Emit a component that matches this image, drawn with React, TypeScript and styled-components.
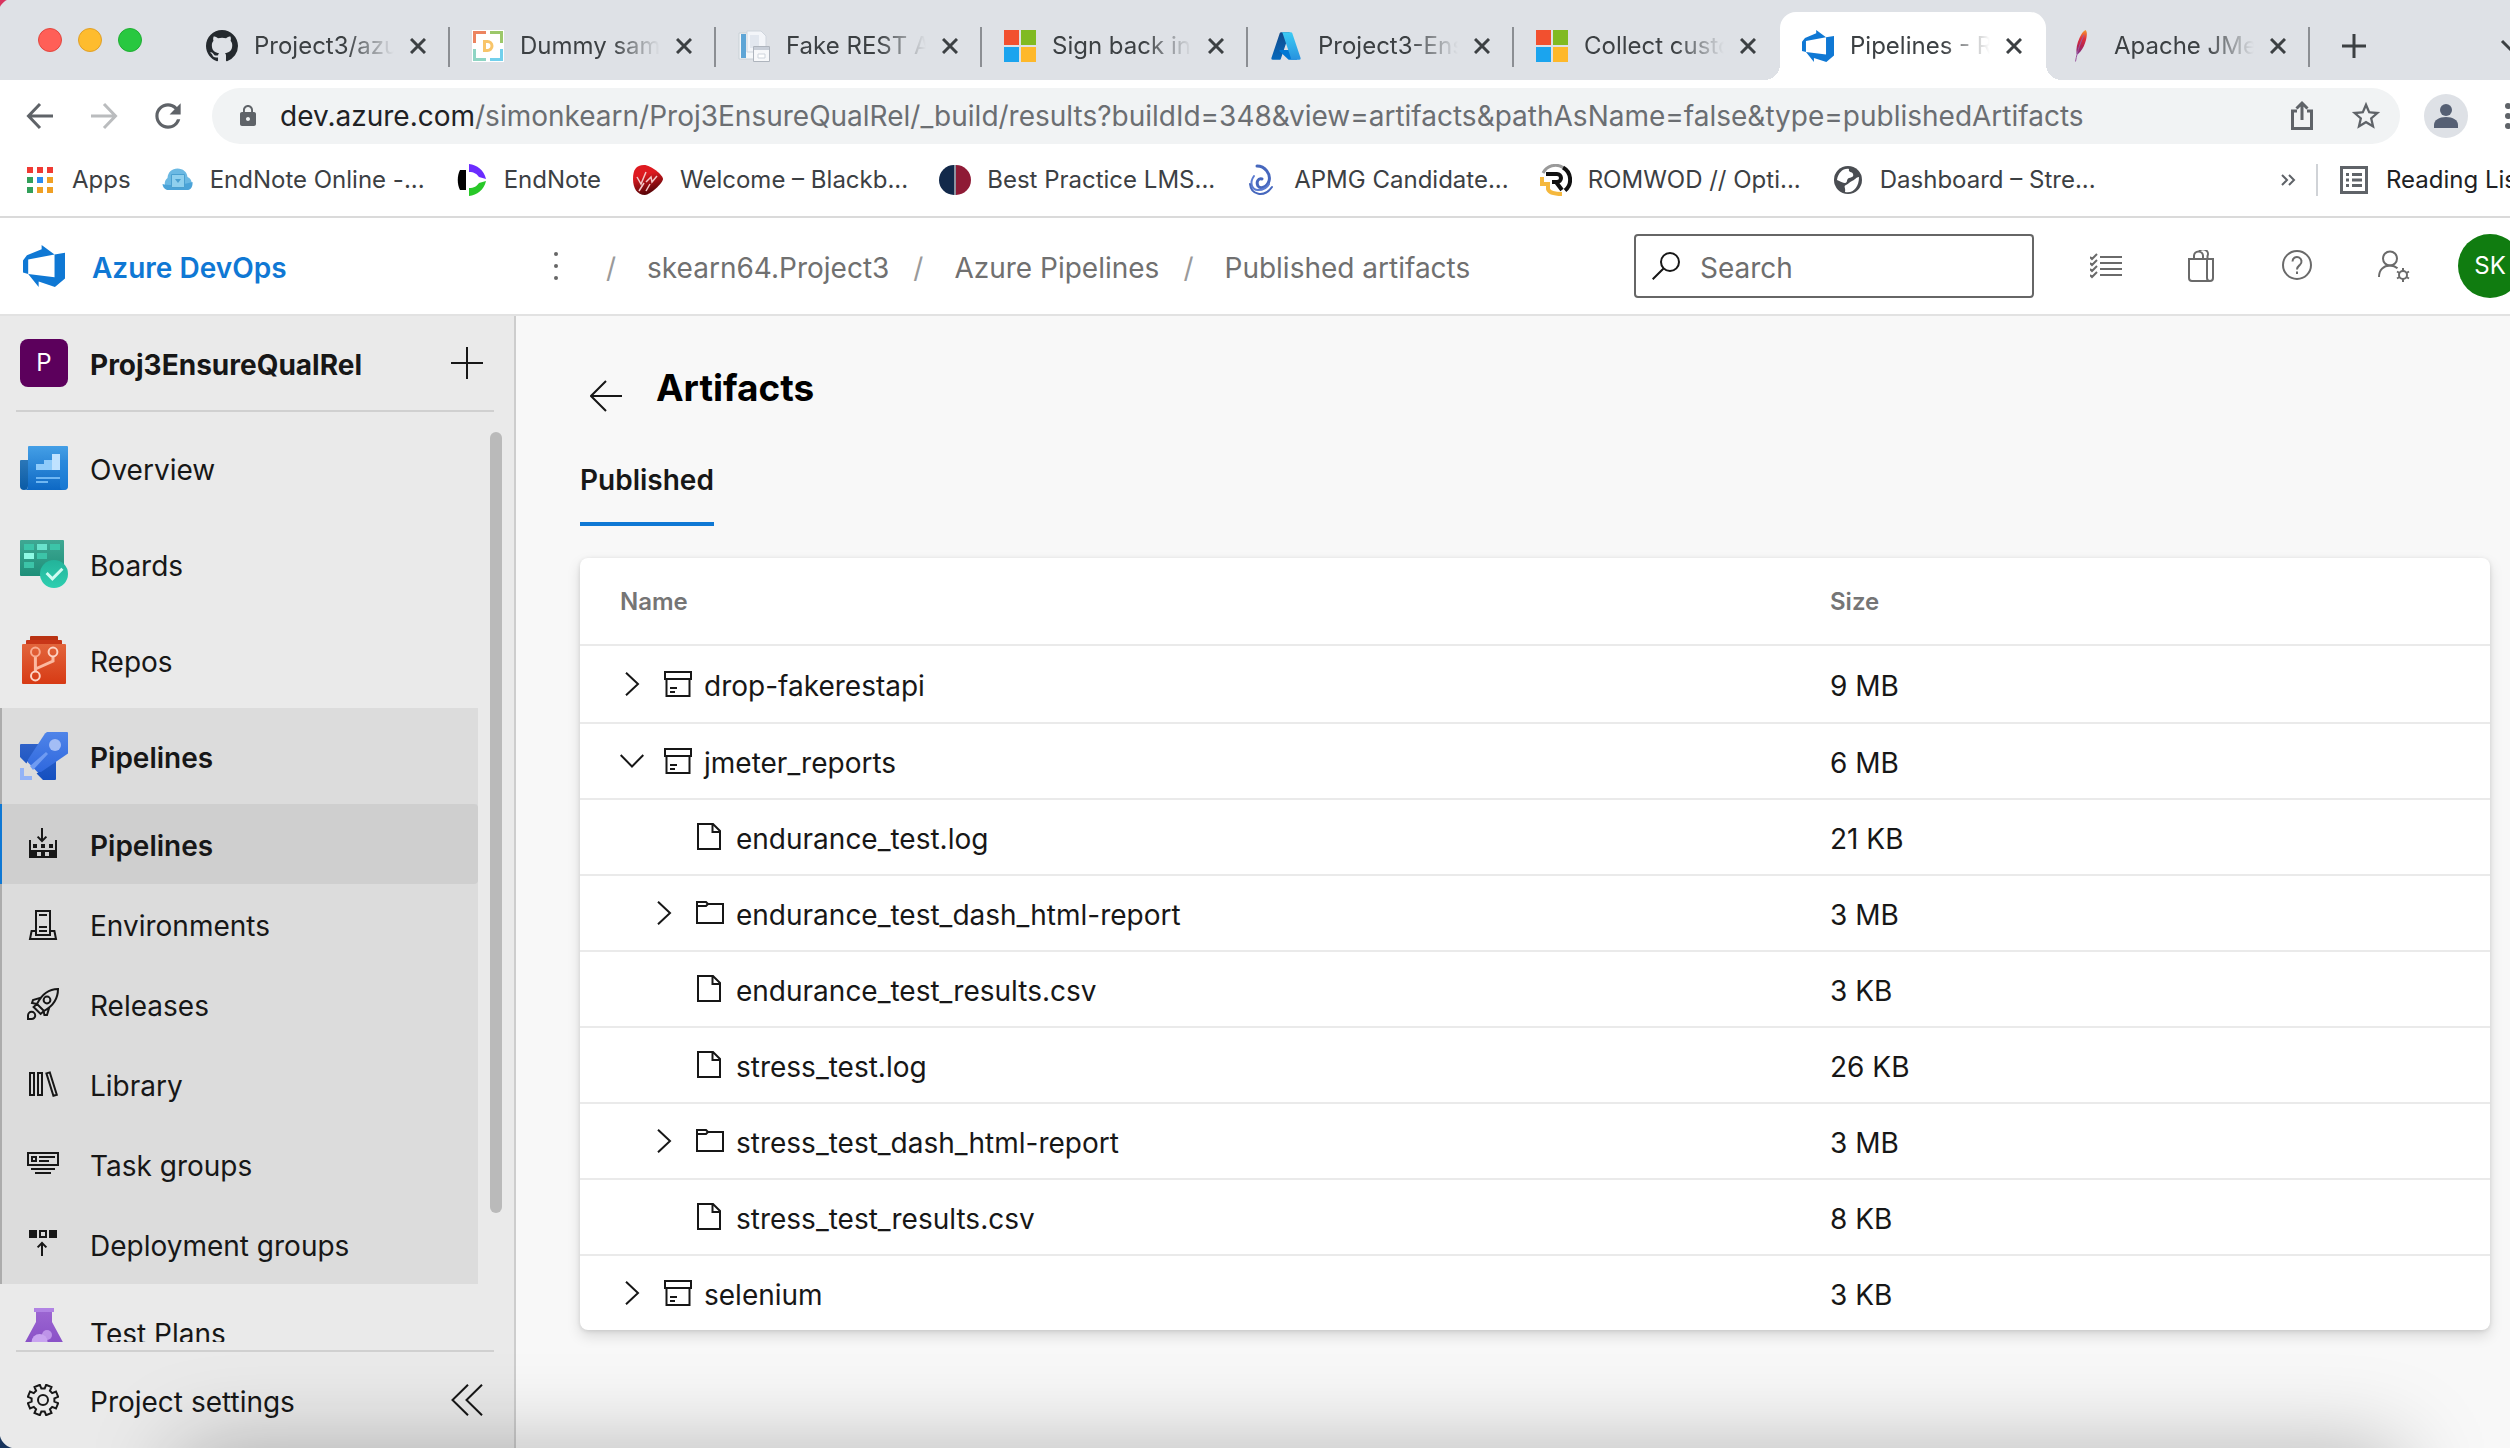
import React from 'react';
import styled, { createGlobalStyle, css } from 'styled-components';
import { MdLock, MdRefresh, MdStarBorder } from 'react-icons/md';

const ink = '#171717';
const muted = '#6e6e6e';
const blue = '#0f78d4';
const chromeInk = '#3c4043';
const chromeGrey = '#5f6368';

const GlobalStyle = createGlobalStyle`
  *, *::before, *::after { box-sizing: border-box; }
  body {
    margin: 0;
    background: #fff;
    color: ${ink};
    font-family: Inter, "Liberation Sans", sans-serif;
    font-size: 28px;
    line-height: 36px;
  }
  button {
    padding: 0;
    border: 0;
    background: none;
    color: inherit;
    font: inherit;
    cursor: pointer;
  }
  input { font: inherit; }
  a { color: inherit; text-decoration: none; }
  svg { display: block; flex: none; }
`;

/* ---------- shared ---------- */

const Shell = styled.div`
  position: relative;
  display: flex;
  flex-direction: column;
  height: 100vh;
  overflow: hidden;
`;

const IconButton = styled.button<{ $w?: number; $h?: number }>`
  display: flex;
  flex: none;
  align-items: center;
  justify-content: center;
  width: ${(p) => p.$w ?? 64}px;
  height: ${(p) => p.$h ?? 64}px;
`;

const Label = styled.span`
  padding-top: 4px;
`;

const Line = ({ size, box, d, width, color = ink, fill = 'none' }: {
  size: number; box: number; d: string; width: number; color?: string; fill?: string;
}) => (
  <svg width={size} height={size} viewBox={`0 0 ${box} ${box}`} fill={fill} stroke={color} strokeWidth={width} aria-hidden="true">
    <path d={d} />
  </svg>
);

const gear = (cx: number, cy: number, teeth: number, outer: number, inner: number) => {
  const step = (Math.PI * 2) / teeth;
  const at = (r: number, a: number) => `${(cx + r * Math.sin(a)).toFixed(2)} ${(cy - r * Math.cos(a)).toFixed(2)}`;
  let d = '';
  for (let i = 0; i < teeth; i += 1) {
    const a = (i + 0.5) * step;
    d += `${i === 0 ? 'M' : 'L'}${at(inner, a - step * 0.32)}L${at(outer, a - step * 0.24)}L${at(outer, a + step * 0.24)}L${at(inner, a + step * 0.32)}`;
  }
  return `${d}Z`;
};

/* ---------- logos ---------- */

const DevOpsLogo = ({ size }: { size: number }) => (
  <svg width={size} height={size} viewBox="0 0 24 24" fill={blue} aria-hidden="true">
    <path d="M0 8.877L2.247 5.91l8.405-3.416V.022l7.37 5.393L2.966 8.338v8.225L0 15.707zm24-4.45v14.651l-5.753 4.9-9.303-3.057v3.056l-5.978-7.416 15.057 1.798V5.415z" />
  </svg>
);

const GitHubLogo = () => (
  <svg width="32" height="32" viewBox="0 0 16 16" fill="#24292e" aria-hidden="true">
    <path d="M8 0C3.58 0 0 3.58 0 8c0 3.54 2.29 6.53 5.47 7.59.4.07.55-.17.55-.38 0-.19-.01-.82-.01-1.49-2.01.37-2.53-.49-2.69-.94-.09-.23-.48-.94-.82-1.13-.28-.15-.68-.52-.01-.53.63-.01 1.08.58 1.23.82.72 1.21 1.87.87 2.33.66.07-.52.28-.87.51-1.07-1.78-.2-3.64-.89-3.64-3.95 0-.87.31-1.59.82-2.15-.08-.2-.36-1.02.08-2.12 0 0 .67-.21 2.2.82.64-.18 1.32-.27 2-.27.68 0 1.36.09 2 .27 1.53-1.04 2.2-.82 2.2-.82.44 1.1.16 1.92.08 2.12.51.56.82 1.27.82 2.15 0 3.07-1.87 3.75-3.65 3.95.29.25.54.73.54 1.48 0 1.07-.01 1.93-.01 2.2 0 .21.15.46.55.38A8.013 8.013 0 0 0 16 8c0-4.42-3.58-8-8-8z" />
  </svg>
);

const DummyLogo = () => (
  <svg width="32" height="32" viewBox="0 0 32 32" fill="none" strokeWidth="3" aria-hidden="true">
    <rect width="32" height="32" fill="#fff" />
    <path d="M2.500 13V2.500H14" stroke="#ec8460" />
    <path d="M18 2.500h11.500V13" stroke="#9cc86a" />
    <path d="M2.500 19v10.500H14" stroke="#8fd5c4" />
    <path d="M18 29.500h11.500V19" stroke="#72d0ec" />
    <path d="M12.500 11.500h3a4.500 4.500 0 0 1 0 9h-3z" stroke="#f8c56a" />
  </svg>
);

const PagesLogo = () => (
  <svg width="32" height="32" viewBox="0 0 32 32" aria-hidden="true">
    <path d="M1 3h20v26H1z" fill="#f5f7f9" stroke="#c9d0d6" />
    <path d="M3 4h5v24H3z" fill="#5ea5d6" />
    <path d="M9 1h14l5 5v16H9z" fill="#f3f5f9" stroke="#cfd5dd" />
    <path d="M12 5h9v13h-9z" fill="#e2e7ef" />
    <path d="M15.500 16.500h16v15h-16z" fill="#f7f8fa" stroke="#aeb4bd" />
    <path d="M16 17h15v3H16z" fill="#c8ced8" />
    <path d="M20 24h7v4h-7z" fill="#fff" stroke="#cfd5dd" />
  </svg>
);

const MicrosoftLogo = () => (
  <svg width="32" height="32" viewBox="0 0 32 32" aria-hidden="true">
    <path d="M0 0h15v15H0z" fill="#f2502f" />
    <path d="M17 0h15v15H17z" fill="#80ba22" />
    <path d="M0 17h15v15H0z" fill="#1ba4ee" />
    <path d="M17 17h15v15H17z" fill="#feb82a" />
  </svg>
);

const AzureLogo = () => (
  <svg width="32" height="32" viewBox="0 0 96 96" aria-hidden="true">
    <defs>
      <linearGradient id="azL" x1="0" y1="0" x2="0" y2="1"><stop stopColor="#114a8b" /><stop offset="1" stopColor="#0669bc" /></linearGradient>
      <linearGradient id="azR" x1="0" y1="0" x2="0" y2="1"><stop stopColor="#3ccbf4" /><stop offset="1" stopColor="#2892df" /></linearGradient>
    </defs>
    <path fill="url(#azL)" d="M33.338 6.544h26.038l-27.030 80.087a4.152 4.152 0 0 1-3.933 2.824H8.149a4.145 4.145 0 0 1-3.928-5.470L29.404 9.368a4.152 4.152 0 0 1 3.934-2.825z" />
    <path fill="#0078d4" d="M71.175 60.261h-41.290a1.911 1.911 0 0 0-1.305 3.309l26.532 24.764a4.171 4.171 0 0 0 2.846 1.121h23.380z" />
    <path fill="url(#azR)" d="M66.595 9.364a4.145 4.145 0 0 0-3.928-2.820H33.648a4.146 4.146 0 0 1 3.928 2.820l25.184 74.620a4.146 4.146 0 0 1-3.928 5.472h29.020a4.146 4.146 0 0 0 3.927-5.472z" />
  </svg>
);

const FeatherLogo = () => (
  <svg width="32" height="32" viewBox="0 0 32 32" aria-hidden="true">
    <defs>
      <linearGradient id="fth" x1="0" y1="1" x2="0" y2="0">
        <stop stopColor="#7b2f8b" /><stop offset=".35" stopColor="#b5234f" /><stop offset=".65" stopColor="#e0303a" /><stop offset="1" stopColor="#f79a2e" />
      </linearGradient>
    </defs>
    <path fill="url(#fth)" d="M19.500 0c2 1.500 1.500 6 .500 10s-3 8.500-5.500 11.500l-3 3-1-1c-.500-5 .500-10 3-15.500C15 4.500 17 1 19.500 0z" />
    <path d="M18 5c-3 6-6.500 15-8.500 26.500" fill="none" stroke="#9b5aa0" strokeWidth="1" />
  </svg>
);

const AppsLogo = () => (
  <svg width="32" height="32" viewBox="0 0 32 32" aria-hidden="true">
    {[['#f03a33', '#f03a33', '#f03a33'], ['#32a05a', '#2a8bf2', '#f0a024'], ['#32a05a', '#f0a024', '#f0a024']].map((row, y) =>
      row.map((c, x) => <rect key={`${x}${y}`} x={3 + x * 10} y={3 + y * 10} width="6" height="6" fill={c} />),
    )}
  </svg>
);

const CloudLogo = () => (
  <svg width="32" height="32" viewBox="0 0 32 32" aria-hidden="true">
    <path d="M7 26a7 7 0 0 1-1.500-12C6 8 10 4.500 15.500 4.500S25 8 25.500 13a7 7 0 0 1-.500 13z" fill="#6bb9e3" />
    <path d="M5 26a7 7 0 0 1-4.500-6c6 2 21 1 30-2 .500 4-1.500 8-4.500 8z" fill="#4aa3d8" />
    <path d="M9.500 10.500h13v13h-13z" fill="#8fd0ee" stroke="#4aa0d0" />
    <path d="M13 15h6l-3 4z" fill="#4aa0d0" />
  </svg>
);

const EndNoteLogo = () => (
  <svg width="32" height="32" viewBox="0 0 32 32" aria-hidden="true">
    <path d="M4 6h6v20H4C1 20 1 12 4 6z" fill="#000" />
    <path d="M13 0c8 1 15 6 17 15l-7-2c-2-3-5-5-10-5z" fill="#6b2cff" />
    <path d="M13 32c8-1 15-6 17-15l-7 2c-2 3-5 5-10 5z" fill="#28c828" />
  </svg>
);

const VirginLogo = () => (
  <svg width="32" height="32" viewBox="0 0 32 32" aria-hidden="true">
    <defs><linearGradient id="vrg" x1="0" y1="0" x2=".3" y2="1"><stop offset=".4" stopColor="#de1a20" /><stop offset="1" stopColor="#5a0508" /></linearGradient></defs>
    <path d="M12 1c7 0 19 10 19 14S18 31 13 31C5 31 1 24 1 15S4 1 12 1z" fill="url(#vrg)" />
    <path d="M5 13l4 7 5-12M14 18l5-5 1 5 5-6M7 27l5-8M18 20l-4 7" fill="none" stroke="#f3c9c9" strokeWidth="1.500" />
  </svg>
);

const BestPracticeLogo = () => (
  <svg width="32" height="32" viewBox="0 0 32 32" aria-hidden="true">
    <path d="M15 1a15 15 0 0 0 0 30z" fill="#12294a" />
    <path d="M17 1a15 15 0 0 1 0 30z" fill="#8f1b36" />
    <path d="M15 1h2v30h-2z" fill="#8d93a0" />
  </svg>
);

const ApmgLogo = () => (
  <svg width="32" height="32" viewBox="0 0 32 32" fill="none" strokeLinecap="round" aria-hidden="true">
    <path d="M11 2c8 0 14 8 12 15-2 7-9 8-11 5-2-4 0-8 4-7" stroke="#4667bd" strokeWidth="3" />
    <path d="M8 12c-5 7-2 14 4 14 5 0 9-2 11-6" stroke="#5b7bd0" strokeWidth="2" />
    <path d="M4 20c1 11 14 14 22 3" stroke="#4667bd" strokeWidth="2" />
  </svg>
);

const RomwodLogo = () => (
  <svg width="32" height="32" viewBox="0 0 32 32" fill="none" aria-hidden="true">
    <path d="M3 9A14 14 0 0 1 23 3.500" stroke="#9a9a9a" strokeWidth="3" />
    <path d="M23 3.500a14 14 0 0 1 2 23" stroke="#111" strokeWidth="4" />
    <path d="M2 13v7h6v5c1 4 6 5 14 5" stroke="#f5b83d" strokeWidth="4" />
    <path d="M6 10h11a4 4 0 0 1 0 8h-5M16 18l6 8" stroke="#111" strokeWidth="4" />
  </svg>
);

const GlobeLogo = () => (
  <svg width="32" height="32" viewBox="0 0 32 32" aria-hidden="true">
    <circle cx="16" cy="16" r="14" fill="#4a4d52" />
    <path d="M17 5c-6-1-11 4-12 11 3 1 6 3 8 3 3 0 1-4 4-5s5-1 4-4-5-1-4-5zM27 13c-3 0-4 3-7 4s-3 3-6 4 0 3-1 7c8 2 14-5 14-15z" fill="#fff" />
  </svg>
);

/* ---------- browser chrome ---------- */

const TabStrip = styled.div`
  display: flex;
  flex: none;
  align-items: flex-end;
  height: 80px;
  padding-left: 38px;
  background: #dee1e6;
`;

const Lights = styled.div`
  display: flex;
  align-self: center;
  gap: 16px;
  margin-right: 42px;
`;

const Light = styled.button<{ $fill: string; $edge: string }>`
  width: 24px;
  height: 24px;
  border: 1px solid ${(p) => p.$edge};
  border-radius: 50%;
  background: ${(p) => p.$fill};
`;

const flare = css`
  content: '';
  position: absolute;
  bottom: 0;
  width: 16px;
  height: 16px;
`;

const Tab = styled.div<{ $active?: boolean; $line?: boolean }>`
  position: relative;
  display: flex;
  flex: none;
  align-items: center;
  gap: 16px;
  width: 266px;
  height: 68px;
  padding-left: 22px;
  border-radius: 16px 16px 0 0;
  background: ${(p) => (p.$active ? '#fff' : 'transparent')};

  ${(p) => p.$active && css`
    margin-right: -2px;

    &::before {
      ${flare}
      right: 100%;
      background: radial-gradient(circle at 0 0, transparent 16px, #fff 16px);
    }
    &::after {
      ${flare}
      left: 100%;
      background: radial-gradient(circle at 100% 0, transparent 16px, #fff 16px);
    }
  `}
  ${(p) => p.$line && css`
    &::after {
      content: '';
      position: absolute;
      right: 0;
      top: 15px;
      width: 2px;
      height: 40px;
      background: #8b8e93;
    }
  `}
`;

const TabTitle = styled.button`
  width: 140px;
  overflow: hidden;
  color: ${chromeInk};
  font-size: 24px;
  line-height: 32px;
  text-align: left;
  white-space: nowrap;
  mask-image: linear-gradient(90deg, #000 66%, transparent 100%);
`;

const ChromeBar = styled.div`
  display: flex;
  flex: none;
  align-items: center;
  height: 72px;
  padding-left: 8px;
  background: #fff;
`;

const Omnibox = styled.div`
  display: flex;
  flex: 1;
  align-items: center;
  height: 56px;
  margin: 0 24px 0 12px;
  padding: 0 2px 0 24px;
  border-radius: 28px;
  background: #f1f3f4;
  color: #202124;
`;

const Host = styled.label`
  margin-left: 20px;
`;

const Address = styled.input`
  flex: 1;
  min-width: 0;
  padding: 0;
  border: 0;
  background: none;
  color: #6b6e72;
  outline: none;
`;

const Profile = styled.button`
  flex: none;
  width: 44px;
  height: 44px;
  overflow: hidden;
  border-radius: 50%;
  background: #dee1e6;
`;

const MoreSlot = styled.div`
  flex: none;
  margin: 0 -22px 0 16px;
`;

const Bookmarks = styled.nav`
  display: flex;
  flex: none;
  align-items: center;
  gap: 31px;
  height: 66px;
  padding: 0 0 8px 24px;
  border-bottom: 2px solid #dadada;
  background: #fff;
  color: ${chromeInk};
  font-size: 24px;
  line-height: 32px;
  white-space: nowrap;
`;

const Bookmark = styled.a`
  display: flex;
  align-items: center;
  gap: 16px;
`;

const BookmarkEnd = styled.div`
  display: flex;
  flex: none;
  align-items: center;
  width: 230px;
  margin-left: auto;
  color: #202124;
`;

const Reading = styled(Bookmark)`
  margin-left: 20px;
  padding-left: 20px;
  border-left: 2px solid #d0d3d7;
`;

const TabEnd = styled.div`
  align-self: center;
  margin: 12px -14px 0 auto;
`;

const tabs = [
  { title: 'Project3/azu', icon: <GitHubLogo /> },
  { title: 'Dummy sam', icon: <DummyLogo /> },
  { title: 'Fake REST A', icon: <PagesLogo /> },
  { title: 'Sign back in', icon: <MicrosoftLogo /> },
  { title: 'Project3-Ens', icon: <AzureLogo /> },
  { title: 'Collect custo', icon: <MicrosoftLogo /> },
  { title: 'Pipelines - R', icon: <DevOpsLogo size={32} /> },
  { title: 'Apache JMe', icon: <FeatherLogo /> },
];
const activeTab = 6;

const bookmarks = [
  { title: 'Apps', icon: <AppsLogo /> },
  { title: 'EndNote Online -...', icon: <CloudLogo /> },
  { title: 'EndNote', icon: <EndNoteLogo /> },
  { title: 'Welcome – Blackb...', icon: <VirginLogo /> },
  { title: 'Best Practice LMS...', icon: <BestPracticeLogo /> },
  { title: 'APMG Candidate...', icon: <ApmgLogo /> },
  { title: 'ROMWOD // Opti...', icon: <RomwodLogo /> },
  { title: 'Dashboard – Stre...', icon: <GlobeLogo /> },
];

const Browser = () => (
  <>
    <TabStrip>
      <Lights>
        <Light $fill="#ff5f57" $edge="#e2463f" aria-label="Close window" />
        <Light $fill="#febc2e" $edge="#e0a028" aria-label="Minimise window" />
        <Light $fill="#28c840" $edge="#1fae33" aria-label="Zoom window" />
      </Lights>
      {tabs.map((tab, i) => (
        <Tab key={tab.title} $active={i === activeTab} $line={i !== activeTab && i !== activeTab - 1}>
          {tab.icon}
          <TabTitle>{tab.title}</TabTitle>
          <IconButton $w={16} $h={32} aria-label="Close tab">
            <Line size={16} box={16} d="M1 1l14 14M15 1L1 15" width={3} color={chromeInk} />
          </IconButton>
        </Tab>
      ))}
      <IconButton $w={88} $h={68} aria-label="New tab">
        <Line size={24} box={24} d="M12 0v24M0 12h24" width={3} color={chromeInk} />
      </IconButton>
      <TabEnd>
        <IconButton $w={24} $h={24} aria-label="Search tabs">
          <Line size={24} box={24} d="M2 7l10 10L22 7" width={3} color={chromeInk} />
        </IconButton>
      </TabEnd>
    </TabStrip>
    <ChromeBar>
      <IconButton aria-label="Back">
        <Line size={32} box={32} d="M29 16H5M16 4L4.500 16L16 28" width={3} color={chromeGrey} />
      </IconButton>
      <IconButton aria-label="Forward">
        <Line size={32} box={32} d="M3 16h24M16 4l11.500 12L16 28" width={3} color="#babcbe" />
      </IconButton>
      <IconButton aria-label="Reload"><MdRefresh size={38} color={chromeGrey} /></IconButton>
      <Omnibox>
        <MdLock size={24} color={chromeGrey} />
        <Host htmlFor="address">dev.azure.com</Host>
        <Address
          id="address"
          aria-label="Address"
          defaultValue="/simonkearn/Proj3EnsureQualRel/_build/results?buildId=348&view=artifacts&pathAsName=false&type=publishedArtifacts"
        />
        <IconButton $h={56} aria-label="Share">
          <Line size={32} box={32} d="M11 11H6.500v17.500h19V11H21M16 20V4M10.500 8.500L16 3l5.500 5.500" width={3} color={chromeGrey} />
        </IconButton>
        <IconButton $h={56} aria-label="Bookmark this page"><MdStarBorder size={34} color={chromeGrey} /></IconButton>
      </Omnibox>
      <Profile aria-label="Profile">
        <svg width="44" height="44" viewBox="0 0 44 44" fill="#566074" aria-hidden="true">
          <circle cx="22" cy="16" r="6" />
          <path d="M10 34v-3c0-5 5-8 12-8s12 3 12 8v3z" />
        </svg>
      </Profile>
      <MoreSlot>
        <IconButton $w={48} $h={48} aria-label="Menu">
          <svg width="32" height="32" viewBox="0 0 32 32" fill={chromeGrey} aria-hidden="true">
            <circle cx="16" cy="6" r="3" /><circle cx="16" cy="16" r="3" /><circle cx="16" cy="26" r="3" />
          </svg>
        </IconButton>
      </MoreSlot>
    </ChromeBar>
    <Bookmarks aria-label="Bookmarks">
      {bookmarks.map((b) => <Bookmark key={b.title} href="#">{b.icon}{b.title}</Bookmark>)}
      <BookmarkEnd>
        <IconButton $w={16} $h={32} aria-label="More bookmarks">
          <Line size={16} box={16} d="M2 3l5 5-5 5M9 3l5 5-5 5" width={2} color={chromeGrey} />
        </IconButton>
        <Reading href="#">
          <svg width="32" height="32" viewBox="0 0 32 32" fill="none" stroke={chromeGrey} strokeWidth="3" aria-hidden="true">
            <path d="M3.500 3.500h25v25h-25zM8 10.500h3M14 10.500h10M8 16h3M14 16h10M8 21.500h3M14 21.500h10" />
          </svg>
          Reading List
        </Reading>
      </BookmarkEnd>
    </Bookmarks>
  </>
);

/* ---------- Azure DevOps header ---------- */

const Header = styled.header`
  display: flex;
  flex: none;
  align-items: center;
  height: 98px;
  border-bottom: 2px solid #e2e2e2;
  background: #fff;
  white-space: nowrap;
`;

const Brand = styled.a`
  display: flex;
  flex: none;
  align-items: center;
  gap: 27px;
  width: 516px;
  padding-left: 23px;
  color: ${blue};
  font-weight: 600;
`;

const Crumbs = styled.ol`
  display: flex;
  gap: 24px;
  margin: 0;
  padding: 4px 0 0 10px;
  color: #707070;
  list-style: none;
`;

const Crumb = styled.li`
  display: flex;
  gap: 31px;

  &::before {
    content: '/';
    color: #9a9a9a;
  }
`;

const HeaderEnd = styled.div`
  display: flex;
  gap: 32px;
  align-items: center;
  margin: 0 -12px 0 auto;
`;

const SearchBox = styled.label`
  display: flex;
  align-items: center;
  gap: 20px;
  width: 400px;
  height: 64px;
  margin-right: 8px;
  padding: 0 16px;
  border: 2px solid #666;
  border-radius: 4px;
`;

const SearchInput = styled.input`
  min-width: 0;
  flex: 1;
  padding: 4px 0 0;
  border: 0;
  background: none;
  outline: none;

  &::placeholder { color: ${muted}; opacity: 1; }
`;

const Avatar = styled.button`
  width: 64px;
  height: 64px;
  border-radius: 50%;
  background: #107c10;
  color: #fff;
  font-size: 24px;
  line-height: 64px;
`;

const iconGrey = '#6a6a6a';

const AppHeader = () => (
  <Header>
    <Brand href="#"><DevOpsLogo size={42} /><Label>Azure DevOps</Label></Brand>
    <IconButton $w={80} aria-label="More">
      <svg width="32" height="32" viewBox="0 0 32 32" fill="#666" aria-hidden="true">
        <circle cx="16" cy="4" r="2" /><circle cx="16" cy="16" r="2" /><circle cx="16" cy="28" r="2" />
      </svg>
    </IconButton>
    <nav aria-label="Breadcrumb">
      <Crumbs>
        <Crumb><a href="#">skearn64.Project3</a></Crumb>
        <Crumb><a href="#">Azure Pipelines</a></Crumb>
        <Crumb><a href="#">Published artifacts</a></Crumb>
      </Crumbs>
    </nav>
    <HeaderEnd>
      <SearchBox>
        <Line size={28} box={28} d="M27 10a9 9 0 1 1-18 0a9 9 0 1 1 18 0M11.500 16.500L.700 27.300" width={2} />
        <SearchInput type="search" aria-label="Search" placeholder="Search" />
      </SearchBox>
      <IconButton aria-label="Work items">
        <Line size={32} box={32} d="M10 7h22M10 13h22M10 19h22M10 25h22M0 7l2 2 5-5M0 13l2 2 5-5M0 19l2 2 5-5M0 25l2 2 5-5" width={2} color={iconGrey} />
      </IconButton>
      <IconButton aria-label="Marketplace">
        <Line size={32} box={32} d="M3 9h24v19a3 3 0 0 1-3 3H6a3 3 0 0 1-3-3zM21 9v19a3 3 0 0 0 3 3M8 9V6a4.500 4.500 0 0 1 9 0v3M13 2a4.500 4.500 0 0 1 8.500 4v3" width={2} color={iconGrey} />
      </IconButton>
      <IconButton aria-label="Help">
        <svg width="32" height="32" viewBox="0 0 32 32" fill="none" stroke={iconGrey} strokeWidth="2" aria-hidden="true">
          <circle cx="15" cy="15" r="14" />
          <path d="M10.500 11.500a4.500 4.500 0 1 1 7.500 3.300c-1.700 1.500-3 2.200-3 4.700M15 21.500v2.500" />
        </svg>
      </IconButton>
      <IconButton aria-label="User settings">
        <svg width="32" height="32" viewBox="0 0 32 32" fill="none" stroke={iconGrey} strokeWidth="2" aria-hidden="true">
          <circle cx="12" cy="8.500" r="7" />
          <path d="M1 27c0-7 4.500-11.500 11-11.500 3 0 5.500 1 7.500 2.800" />
          <circle cx="25" cy="25" r="4" />
          <path d="M25 18v3M25 29v3M19 21.500l2.600 1.500M28.400 27l2.600 1.500M19 28.500l2.600-1.500M28.400 23l2.600-1.500" />
        </svg>
      </IconButton>
      <Avatar>SK</Avatar>
    </HeaderEnd>
  </Header>
);

/* ---------- sidebar ---------- */

const Body = styled.div`
  display: flex;
  flex: 1;
  min-height: 0;
`;

const Sidebar = styled.aside`
  display: flex;
  flex: none;
  flex-direction: column;
  width: 516px;
  border-right: 2px solid #cdcdcd;
  background: #eaeaea;
`;

const SideBar = styled.div<{ $h: number }>`
  display: flex;
  flex: none;
  align-items: center;
  height: ${(p) => p.$h}px;
  padding: 0 15px 0 20px;
`;

const Badge = styled.span`
  width: 48px;
  margin-right: 22px;
  border-radius: 8px;
  background: #5c005c;
  color: #fff;
  font-size: 24px;
  line-height: 48px;
  text-align: center;
`;

const Grow = styled.a<{ $bold?: boolean }>`
  flex: 1;
  padding-top: 4px;
  font-weight: ${(p) => (p.$bold ? 700 : 400)};
`;

const Rule = styled.hr`
  flex: none;
  height: 2px;
  margin: 0 20px 0 16px;
  border: 0;
  background: #d0d0d0;
`;

const NavScroll = styled.div`
  display: flex;
  flex: 1;
  gap: 12px;
  min-height: 0;
  margin-bottom: 8px;
  padding-right: 12px;
  overflow: hidden;
`;

const NavList = styled.nav`
  flex: 1;
  padding-top: 8px;
`;

const Thumb = styled.div`
  width: 12px;
  height: 84%;
  margin-top: 20px;
  border-radius: 6px;
  background: #bababa;
`;

const NavItem = styled.a<{ $bold?: boolean }>`
  display: flex;
  align-items: center;
  gap: 22px;
  height: 96px;
  padding-left: 20px;
  font-weight: ${(p) => (p.$bold ? 600 : 400)};
`;

const NavGroup = styled.div`
  background: #dcdcdc;
  box-shadow: inset 2px 0 #acacac;
`;

const SubItem = styled(NavItem)<{ $selected?: boolean }>`
  gap: 31px;
  height: 80px;
  padding-left: 27px;
  ${(p) => p.$selected && css`
    border-radius: 0 4px 4px 0;
    background: #cfcfcf;
    box-shadow: inset 2px 0 ${blue};
    font-weight: 600;
  `}
`;

const SettingsSlot = styled.span`
  margin-right: 31px;
  padding-left: 7px;
`;

const Glyph = ({ children }: { children: React.ReactNode }) => (
  <svg width="32" height="32" viewBox="0 0 16 16" fill="none" stroke={ink} aria-hidden="true">{children}</svg>
);

const Art = ({ children }: { children: React.ReactNode }) => (
  <svg width="48" height="48" viewBox="0 0 24 24" aria-hidden="true">{children}</svg>
);

const Fade = ({ id, from, to }: { id: string; from: string; to: string }) => (
  <linearGradient id={id} x1="0" y1="0" x2="0" y2="1"><stop stopColor={from} /><stop offset="1" stopColor={to} /></linearGradient>
);

const OverviewArt = () => (
  <Art>
    <defs><Fade id="ov" from="#449fe6" to="#0d68c4" /><Fade id="ovl" from="#2b77b8" to="#0a5ba6" /></defs>
    <path d="M0 8.500Q0 8 .500 8H4v13a2 2 0 0 1-4 0z" fill="url(#ovl)" />
    <path d="M4 1.500Q4 1 4.500 1h19q.5 0 .5.500V21a2 2 0 0 1-2 2H2q2 0 2-2z" fill="url(#ov)" />
    <path d="M20 8h4v13a2 2 0 0 1-4 0z" fill="#1f86e0" opacity=".5" />
    <path d="M8 10h4V8h4v5H8z" fill="#8fcbfa" /><path d="M16 5h4v8h-4z" fill="#c0e2ff" />
    <path d="M8 16.500h12v1H8zM8 18.500h6v1H8z" fill="#6fb6f2" />
  </Art>
);

const BoardsArt = () => (
  <Art>
    <defs><Fade id="bd" from="#3fa893" to="#1e8f79" /><Fade id="bdc" from="#23b39a" to="#2ecfb0" /></defs>
    <rect width="22" height="18" rx=".5" fill="url(#bd)" />
    <path d="M2 2h5v3H2zM15 2h5v3h-5zM8.500 6.500h5v3h-5zM2 11h5v3H2z" fill="#3cc4a8" />
    <path d="M8.500 2h5v3h-5z" fill="#6ae3cc" /><path d="M2 6.500h5v3H2z" fill="#8ef9e4" />
    <circle cx="17" cy="17" r="7" fill="url(#bdc)" />
    <path d="M13.300 16.500l2.900 2.900 5-5" fill="none" stroke="#cffcf2" strokeWidth="1.500" />
  </Art>
);

const ReposArt = () => (
  <Art>
    <defs><Fade id="rp" from="#e2653c" to="#d73a14" /></defs>
    <path d="M5 .5Q5 0 5.500 0h13q.5 0 .5.500V2H5z" fill="#b93212" />
    <path d="M3 2.500Q3 2 3.500 2h17q.5 0 .5.500V4H3z" fill="#c83618" />
    <rect x="1" y="4" width="22" height="20" rx=".5" fill="url(#rp)" />
    <path d="M7.700 10v8M16.500 10v2.500l-8.800 4" fill="none" stroke="#fbb9a0" strokeWidth="1.500" />
    <g fill="none" stroke="#fdd3c4"><circle cx="7.700" cy="8" r="2.200" stroke="#f9ab90" /><circle cx="16.500" cy="8" r="2.200" /><circle cx="7.700" cy="20" r="2.200" /></g>
  </Art>
);

const PipelinesArt = () => (
  <Art>
    <defs><Fade id="pl" from="#2f62c8" to="#1450c0" /><Fade id="plr" from="#4f84e8" to="#2f68de" /></defs>
    <path d="M0 6.500Q0 6 .500 6H10L4 14.500l-.800 1.200L0 12.500zM18 13v10.500q0 .5-.500.500H11.500L8.300 20.700z" fill="url(#pl)" />
    <path d="M13.500 0h10q.5 0 .5.500V10.800L10.500 20 8.700 20 4 15.200V13.800L12.500.700z" fill="url(#plr)" />
    <path d="M5 17l8-7 1 1-7.500 8z" fill="#6f9bf2" />
    <circle cx="17.500" cy="6.500" r="3" fill="#a3bdf5" />
    <path d="M0 18h2v4h4v2H0z" fill="#93b3f7" />
  </Art>
);

const TestArt = () => (
  <Art>
    <defs><Fade id="tp" from="#9c66d2" to="#8248c2" /></defs>
    <path d="M8 1h8v6l6.500 12q2 5-2.500 5H4q-4.500 0-2.500-5L8 7z" fill="url(#tp)" />
    <path d="M7 0h10v2H7z" fill="#b183e4" />
    <circle cx="9.800" cy="17" r="4" fill="#c9a4f0" /><circle cx="13.500" cy="13.500" r="2.500" fill="#c9a4f0" opacity=".8" />
  </Art>
);

const subItems = [
  {
    name: 'Pipelines', selected: true, icon: (
      <Glyph>
        <path d="M7.500 0v6M5.300 4.300l2.200 2.200 2.200-2.200M1.500 6v9M14.500 6v9" />
        <path d="M3 8h2v2H3zM7 8h2v2H7zM11 8h2v2h-2zM1 11h14v4H1zM5 12v2h2v-2zM9 12v2h2v-2z" fill={ink} fillRule="evenodd" stroke="none" />
      </Glyph>
    ),
  },
  { name: 'Environments', icon: <Glyph><path d="M4.500 1.500h7v12h-7zM6 3.500h4M6 9.500h4M6 11.500h4M4 11.500H2.300l-.8 4h13l-.8-4H12" /></Glyph> },
  {
    name: 'Releases', icon: (
      <Glyph>
        <path d="M15.500.500C10.500.500 7.500 3 5 8l3.500 3.500C13 9 15.500 5.500 15.500.500zM7 4.800L3 6l-.5 1.500 2.500.500M11.200 9.500L10 13.500H8.700L8.200 11M5 8L3.300 9.500l3.500 3.500L8.500 11.500M.500 15.500v-1.800a1.800 1.800 0 1 1 1.800 1.800z" />
        <circle cx="10" cy="6" r="1.700" />
      </Glyph>
    ),
  },
  { name: 'Library', icon: <Glyph><path d="M1.500 2.500h2v11h-2zM5.500 2.500h2v11h-2zM9.700 2.700l1.700-.5 3.500 11.200-1.700.500z" /></Glyph> },
  { name: 'Task groups', icon: <Glyph><path d="M.500 2.500h15v6H.500zM2.500 4.500h2v2h-2zM6 4.500h8M6 6.500h5M2 10.500h12M4 12.500h8" /></Glyph> },
  {
    name: 'Deployment groups', icon: (
      <Glyph>
        <path d="M1 1h4v4H1zM11 1h4v4h-4z" fill={ink} stroke="none" />
        <path d="M6.500 1.500h3v3h-3zM7.500 14V7.500M5.300 9.700l2.200-2.200 2.200 2.200" />
      </Glyph>
    ),
  },
];

const SideNav = () => (
  <Sidebar>
    <SideBar $h={94}>
      <Badge>P</Badge>
      <Grow href="#" $bold>Proj3EnsureQualRel</Grow>
      <IconButton aria-label="Add">
        <Line size={32} box={32} d="M16 0v32M0 16h32" width={2} />
      </IconButton>
    </SideBar>
    <Rule />
    <NavScroll>
      <NavList aria-label="Project">
        <NavItem href="#"><OverviewArt /><Label>Overview</Label></NavItem>
        <NavItem href="#"><BoardsArt /><Label>Boards</Label></NavItem>
        <NavItem href="#"><ReposArt /><Label>Repos</Label></NavItem>
        <NavGroup>
          <NavItem href="#" $bold><PipelinesArt /><Label>Pipelines</Label></NavItem>
          {subItems.map((s) => (
            <SubItem key={s.name} href="#" $selected={s.selected}>{s.icon}<Label>{s.name}</Label></SubItem>
          ))}
        </NavGroup>
        <NavItem href="#"><TestArt /><Label>Test Plans</Label></NavItem>
      </NavList>
      <Thumb />
    </NavScroll>
    <Rule />
    <SideBar $h={96}>
      <SettingsSlot>
        <svg width="32" height="32" viewBox="0 0 32 32" fill="none" stroke={ink} strokeWidth="2" aria-hidden="true">
          <path d={gear(16, 16, 8, 15.5, 11.5)} /><circle cx="16" cy="16" r="5" />
        </svg>
      </SettingsSlot>
      <Grow href="#">Project settings</Grow>
      <IconButton aria-label="Collapse">
        <Line size={32} box={32} d="M17 .700L1.500 16L17 31.300M31 .700L15.500 16L31 31.300" width={2} />
      </IconButton>
    </SideBar>
  </Sidebar>
);

/* ---------- artifacts page ---------- */

const Main = styled.main`
  flex: 1;
  min-width: 0;
  padding: 40px 20px 0 64px;
  background: #f8f8f8;
`;

const TitleRow = styled.div`
  display: flex;
  gap: 24px;
  align-items: flex-end;
`;

const Title = styled.h1`
  margin: 0;
  color: #000;
  font-size: 37px;
  font-weight: 700;
  line-height: 64px;
`;

const PageTabs = styled.div`
  display: flex;
  margin: 18px 0 32px;
`;

const PageTab = styled.button`
  height: 88px;
  border-bottom: 4px solid ${blue};
  font-weight: 600;
`;

const Card = styled.section`
  overflow: hidden;
  border-radius: 8px;
  background: #fff;
  box-shadow: 0 6px 14px rgba(0, 0, 0, 0.13), 0 1px 4px rgba(0, 0, 0, 0.11);
`;

const Table = styled.table`
  width: 100%;
  border-spacing: 0;
  table-layout: fixed;
`;

const HeadCell = styled.th<{ $w?: number }>`
  width: ${(p) => (p.$w ? `${p.$w}px` : 'auto')};
  height: 88px;
  padding: 2px 0 0 40px;
  border-bottom: 2px solid #eaeaea;
  color: #757575;
  font-size: 24px;
  font-weight: 600;
  text-align: left;
`;

const Row = styled.tr`
  height: 76px;
  &:first-child { height: 78px; }
  &:last-child { height: 74px; }
  &:not(:last-child) td { border-bottom: 2px solid #eaeaea; }
`;

const Cell = styled.td`
  padding: 0 0 0 40px;
`;

const SizeCell = styled(Cell)`
  padding-top: 3px;
`;

const NameFlex = styled.div<{ $depth: number }>`
  display: flex;
  align-items: center;
  padding-left: ${(p) => p.$depth * 32}px;
`;

const ChevronSlot = styled.span`
  width: 24px;
  margin-right: 20px;
`;

const FileName = styled.a`
  margin-left: 12px;
  padding-top: 3px;
`;

const PackageIcon = () => (
  <Line size={28} box={28} d="M1 2h26v7H1zM2.500 9v17h23V9M6 18h7M6 22h5" width={2} />
);
const FolderIcon = () => (
  <Line size={28} box={28} d="M1 3h9l2 2h15v19H1zM1 7h9l2-2" width={2} />
);
const FileIcon = () => (
  <Line size={28} box={28} d="M2 1h15l7 7v18H2zM16.500 1v8H24" width={2} />
);

type Kind = 'package' | 'folder' | 'file';
const icons: Record<Kind, React.ReactNode> = { package: <PackageIcon />, folder: <FolderIcon />, file: <FileIcon /> };

const artifacts: { name: string; size: string; kind: Kind; depth: number; open?: boolean }[] = [
  { name: 'drop-fakerestapi', size: '9 MB', kind: 'package', depth: 0 },
  { name: 'jmeter_reports', size: '6 MB', kind: 'package', depth: 0, open: true },
  { name: 'endurance_test.log', size: '21 KB', kind: 'file', depth: 1 },
  { name: 'endurance_test_dash_html-report', size: '3 MB', kind: 'folder', depth: 1 },
  { name: 'endurance_test_results.csv', size: '3 KB', kind: 'file', depth: 1 },
  { name: 'stress_test.log', size: '26 KB', kind: 'file', depth: 1 },
  { name: 'stress_test_dash_html-report', size: '3 MB', kind: 'folder', depth: 1 },
  { name: 'stress_test_results.csv', size: '8 KB', kind: 'file', depth: 1 },
  { name: 'selenium', size: '3 KB', kind: 'package', depth: 0 },
];

const Artifacts = () => (
  <Main>
    <TitleRow>
      <IconButton $w={52} $h={48} aria-label="Back to run">
        <Line size={32} box={32} d="M32 16H1M16 1L1 16l15 15" width={2} />
      </IconButton>
      <Title>Artifacts</Title>
    </TitleRow>
    <PageTabs role="tablist">
      <PageTab role="tab" aria-selected="true">Published</PageTab>
    </PageTabs>
    <Card>
      <Table>
        <thead>
          <tr><HeadCell scope="col">Name</HeadCell><HeadCell scope="col" $w={700}>Size</HeadCell></tr>
        </thead>
        <tbody>
          {artifacts.map((a) => (
            <Row key={a.name}>
              <Cell>
                <NameFlex $depth={a.depth}>
                  <ChevronSlot>
                    {a.kind !== 'file' && (
                      <IconButton $w={24} $h={24} aria-label={a.open ? 'Collapse' : 'Expand'} aria-expanded={!!a.open}>
                        <Line size={24} box={24} d={a.open ? 'M.700 6L12 17.500L23.300 6' : 'M6 .700L18 12L6 23.300'} width={2} />
                      </IconButton>
                    )}
                  </ChevronSlot>
                  {icons[a.kind]}
                  <FileName href="#">{a.name}</FileName>
                </NameFlex>
              </Cell>
              <SizeCell>{a.size}</SizeCell>
            </Row>
          ))}
        </tbody>
      </Table>
    </Card>
  </Main>
);

/* Soft shade that rises over the bottom edge of the window, and its rounded corners. */
const DockShade = styled.div`
  position: absolute;
  top: 100%;
  left: 180px;
  right: 110px;
  height: 120px;
  box-shadow: 0 0 90px rgba(0, 0, 0, 0.27);
  pointer-events: none;
`;

const Corner = styled.span<{ $top?: boolean }>`
  position: absolute;
  left: 0;
  width: 16px;
  height: 16px;
  pointer-events: none;
  ${(p) => (p.$top
    ? 'top: 0; background: radial-gradient(circle at 100% 100%, transparent 18px, #d8345f 19px);'
    : 'bottom: 0; background: radial-gradient(circle at 100% 0, transparent 16px, #17345c 17px);')}
`;

export default function App() {
  return (
    <Shell>
      <GlobalStyle />
      <Browser />
      <AppHeader />
      <Body>
        <SideNav />
        <Artifacts />
      </Body>
      <DockShade />
      <Corner $top />
      <Corner />
    </Shell>
  );
}
